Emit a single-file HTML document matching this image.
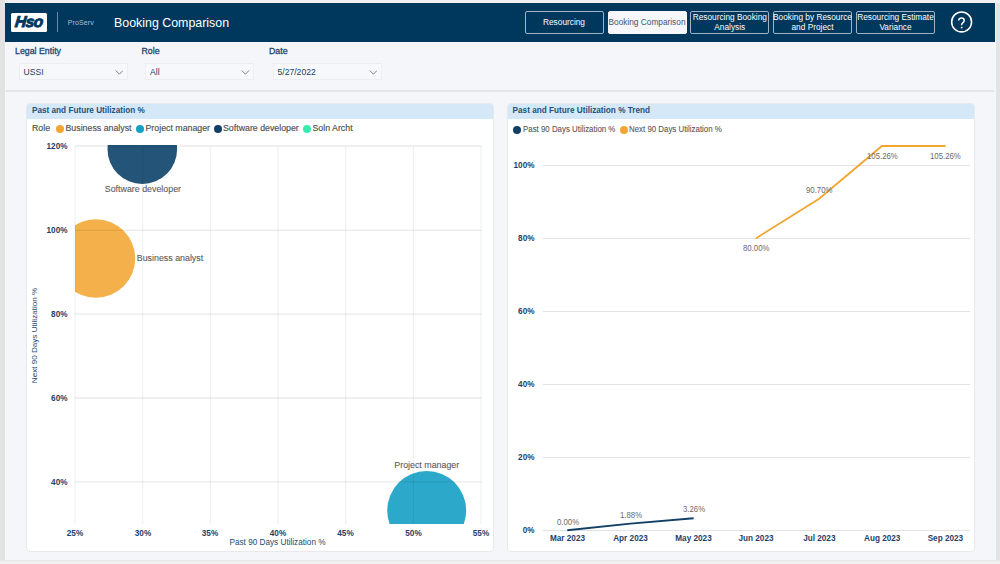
<!DOCTYPE html>
<html><head><meta charset="utf-8">
<style>
*{margin:0;padding:0;box-sizing:border-box}
html,body{width:1000px;height:564px;overflow:hidden;background:#f0f0f0;font-family:"Liberation Sans",sans-serif}
.abs{position:absolute}
#leftstrip{left:0;top:0;width:5px;height:560px;background:#e2e2e2}
#rightstrip{left:996px;top:3px;width:4px;height:557px;background:#e4e4e4}
#botline{left:0;top:560px;width:1000px;height:1px;background:#e6e6e6}
#page{left:5px;top:41px;width:991px;height:519px;background:#f4f6f9}
#header{left:5px;top:3px;width:990px;height:38.5px;background:#00385d}
.logo{left:11px;top:12.5px;width:36px;height:19.5px;background:#fff;border-radius:1.5px}
.logo span{position:absolute;left:4.4px;top:0.9px;font:italic bold 15.6px "Liberation Sans",sans-serif;color:#003660;letter-spacing:-0.6px;-webkit-text-stroke:0.9px #003660;transform:skewX(-6deg)}
.divider{left:57px;top:12.2px;width:1px;height:19.8px;background:#6a8dab}
.proserv{left:67.8px;top:19.1px;font-size:7px;color:#aebfce;letter-spacing:0.12px}
.title{left:114px;top:16px;font-size:12.4px;color:#fff;white-space:nowrap}
.btn{top:11px;height:23px;width:79px;padding-top:0.8px;border:1px solid #9fb3c6;border-radius:2px;color:#fff;font-size:8.3px;line-height:9.5px;display:flex;align-items:center;justify-content:center;text-align:center;white-space:nowrap}
.btn.sel{background:#f5f7fa;color:#3d5577;border-color:#f5f7fa}
.help{left:951px;top:11.5px;width:21px;height:21px;border:2px solid #fff;border-radius:50%;color:#fff;font-size:14px;line-height:17px;text-align:center}
.flabel{top:45.7px;font-size:8.8px;color:#24466e;-webkit-text-stroke:0.3px #24466e}
.dd{top:63px;height:17px;width:109.2px;border:1px solid #eceef1;background:#f6f8fb}
.dd span{position:absolute;left:4px;top:3.2px;font-size:8.6px;color:#28405e}
.chev{position:absolute;right:3.3px;top:6.2px;width:8.8px;height:5px}
#sep{left:6px;top:90px;width:988px;height:1.8px;background:#e3e5e8}
.card{top:102.6px;height:449px;background:#fff;border:1px solid #e8e9eb;border-radius:4px;overflow:hidden}
.ctitle{left:0;top:0;right:0;height:15.5px;background:#d5e8f8}
.ctitle span{position:absolute;left:5px;top:2.3px;font-size:8.2px;font-weight:bold;color:#22507a;white-space:nowrap}
.leg{font-size:8.8px;color:#4f4f4f;white-space:nowrap;-webkit-text-stroke:0.15px #4f4f4f}
.dot{width:8px;height:8px;border-radius:50%}
.ylab{font-size:8.2px;font-weight:bold;color:#1f3f66;white-space:nowrap;margin-top:1px}
.blab{font-size:8.85px;color:#5c5c5c;white-space:nowrap;-webkit-text-stroke:0.1px #5c5c5c}
.dlab{font-size:8.3px;color:#6a6a6a;white-space:nowrap;transform:scaleX(0.94);transform-origin:left top}
</style></head><body>
<div class="abs" id="leftstrip"></div>
<div class="abs" id="botline"></div>
<div class="abs" id="rightstrip"></div>
<div class="abs" id="page"></div>
<div class="abs" id="header">
</div>
<div class="abs logo"><span>Hso</span></div>
<div class="abs divider"></div>
<div class="abs proserv">ProServ</div>
<div class="abs title">Booking Comparison</div>
<div class="abs btn" style="left:524.5px">Resourcing</div>
<div class="abs btn sel" style="left:607.5px">Booking Comparison</div>
<div class="abs btn" style="left:690.3px">Resourcing Booking<br>Analysis</div>
<div class="abs btn" style="left:773px">Booking by Resource<br>and Project</div>
<div class="abs btn" style="left:856px">Resourcing Estimate<br>Variance</div>
<svg class="abs" style="left:950px;top:11px" width="23" height="22" viewBox="0 0 23 22"><circle cx="11.6" cy="10.9" r="9.95" fill="none" stroke="#fff" stroke-width="1.55"/><path d="M8.7 9.6C8.7 7.9 10 6.9 11.5 6.9C13 6.9 14.2 7.9 14.2 9.4C14.2 10.8 13.3 11.4 12.5 12C11.9 12.5 11.6 13 11.6 14.3" fill="none" stroke="#fff" stroke-width="1.5"/><rect x="10.85" y="15.8" width="1.6" height="1.5" fill="#fff"/></svg>

<div class="abs flabel" style="left:15px">Legal Entity</div>
<div class="abs flabel" style="left:141.5px">Role</div>
<div class="abs flabel" style="left:269px">Date</div>
<div class="abs dd" style="left:18.5px"><span>USSI</span><svg class="chev" viewBox="0 0 10 6"><path d="M0.5 0.5L5 5L9.5 0.5" fill="none" stroke="#555" stroke-width="0.9"/></svg></div>
<div class="abs dd" style="left:145px"><span>All</span><svg class="chev" viewBox="0 0 10 6"><path d="M0.5 0.5L5 5L9.5 0.5" fill="none" stroke="#555" stroke-width="0.9"/></svg></div>
<div class="abs dd" style="left:272.5px"><span>5/27/2022</span><svg class="chev" viewBox="0 0 10 6"><path d="M0.5 0.5L5 5L9.5 0.5" fill="none" stroke="#555" stroke-width="0.9"/></svg></div>
<div class="abs" id="sep"></div>

<!-- Left card -->
<div class="abs card" style="left:26px;width:467.5px">
  <div class="abs ctitle"><span>Past and Future Utilization %</span></div>
</div>
<!-- Right card -->
<div class="abs card" style="left:506.6px;width:468.6px">
  <div class="abs ctitle"><span>Past and Future Utilization % Trend</span></div>
</div>

<svg class="abs" style="left:0;top:0" width="1000" height="564" viewBox="0 0 1000 564">
  <!-- left chart -->
  <defs><clipPath id="plotclip"><rect x="75" y="145" width="406" height="379"/></clipPath></defs>
  <g clip-path="url(#plotclip)">
    <circle cx="142.3" cy="149.2" r="34.8" fill="#11456b" fill-opacity="0.92"/>
    <circle cx="95.9" cy="258.5" r="39.3" fill="#f2a531" fill-opacity="0.88"/>
    <circle cx="426.7" cy="510.5" r="39.5" fill="#15a0c4" fill-opacity="0.9"/>
  </g>
  <g stroke="rgba(0,0,0,0.08)" stroke-width="1.35">
    <line x1="75" y1="146" x2="481.5" y2="146"/>
    <line x1="75" y1="230.3" x2="481.5" y2="230.3"/>
    <line x1="75" y1="314.1" x2="481.5" y2="314.1"/>
    <line x1="75" y1="398" x2="481.5" y2="398"/>
    <line x1="75" y1="481.8" x2="481.5" y2="481.8"/>
  </g>
  <g stroke="rgba(0,0,0,0.058)" stroke-width="1.2">
    <line x1="75" y1="146.6" x2="75" y2="524"/>
    <line x1="142.7" y1="146.6" x2="142.7" y2="524"/>
    <line x1="210.3" y1="146.6" x2="210.3" y2="524"/>
    <line x1="278" y1="146.6" x2="278" y2="524"/>
    <line x1="345.7" y1="146.6" x2="345.7" y2="524"/>
    <line x1="413.4" y1="146.6" x2="413.4" y2="524"/>
    <line x1="481" y1="146.6" x2="481" y2="524"/>
  </g>
  <!-- right chart gridlines -->
  <g stroke="#e3e3e3" stroke-width="1.1">
    <line x1="542.5" y1="165.5" x2="970" y2="165.5"/>
    <line x1="542.5" y1="238.5" x2="970" y2="238.5"/>
    <line x1="542.5" y1="311.5" x2="970" y2="311.5"/>
    <line x1="542.5" y1="384.5" x2="970" y2="384.5"/>
    <line x1="542.5" y1="457.5" x2="970" y2="457.5"/>
    <line x1="542.5" y1="530.5" x2="970" y2="530.5"/>
  </g>
  <polyline points="567.3,530.3 630.4,523.6 693.6,518.3" fill="none" stroke="#123f66" stroke-width="1.9"/>
  <polyline points="755.8,238.4 819.1,198.8 881.9,146 945.5,146" fill="none" stroke="#f2a531" stroke-width="1.8"/>
</svg>

<!-- left chart legend -->
<div class="abs leg" style="left:32px;top:123px">Role</div>
<div class="abs dot" style="left:55.8px;top:125px;background:#f2a531"></div>
<div class="abs leg" style="left:65.5px;top:123px">Business analyst</div>
<div class="abs dot" style="left:136.2px;top:125px;background:#15a0c4"></div>
<div class="abs leg" style="left:145.5px;top:123px">Project manager</div>
<div class="abs dot" style="left:214px;top:125px;background:#123f66"></div>
<div class="abs leg" style="left:223px;top:123px">Software developer</div>
<div class="abs dot" style="left:302.5px;top:125px;background:#37eab0"></div>
<div class="abs leg" style="left:312.5px;top:123px">Soln Archt</div>

<!-- left y labels -->
<div class="abs ylab" style="right:932.5px;top:141px">120%</div>
<div class="abs ylab" style="right:932.5px;top:225px">100%</div>
<div class="abs ylab" style="right:932.5px;top:309px">80%</div>
<div class="abs ylab" style="right:932.5px;top:393px">60%</div>
<div class="abs ylab" style="right:932.5px;top:477px">40%</div>
<!-- left x labels -->
<div class="abs ylab" style="left:58px;top:527.5px;width:34px;text-align:center">25%</div>
<div class="abs ylab" style="left:126px;top:527.5px;width:34px;text-align:center">30%</div>
<div class="abs ylab" style="left:193px;top:527.5px;width:34px;text-align:center">35%</div>
<div class="abs ylab" style="left:261px;top:527.5px;width:34px;text-align:center">40%</div>
<div class="abs ylab" style="left:328.5px;top:527.5px;width:34px;text-align:center">45%</div>
<div class="abs ylab" style="left:396.5px;top:527.5px;width:34px;text-align:center">50%</div>
<div class="abs ylab" style="left:464px;top:527.5px;width:34px;text-align:center">55%</div>
<div class="abs" style="left:229.5px;top:537.5px;font-size:8.2px;color:#244a75;white-space:nowrap">Past 90 Days Utilization %</div>
<div class="abs" style="left:-13.6px;top:330.6px;width:96px;font-size:8.1px;color:#244a75;white-space:nowrap;transform:rotate(-90deg);text-align:center">Next 90 Days Utilization %</div>
<!-- bubble labels -->
<div class="abs blab" style="left:104.8px;top:184.2px">Software developer</div>
<div class="abs blab" style="left:136.8px;top:253.2px">Business analyst</div>
<div class="abs blab" style="left:394.3px;top:459.7px">Project manager</div>

<!-- right legend -->
<div class="abs dot" style="left:513px;top:125.5px;background:#123f66"></div>
<div class="abs leg" style="left:522.8px;top:124.2px;font-size:9px;color:#585858;transform:scaleX(0.875);transform-origin:left top;-webkit-text-stroke:0.1px #585858">Past 90 Days Utilization %</div>
<div class="abs dot" style="left:619.7px;top:125.5px;background:#f2a531"></div>
<div class="abs leg" style="left:629px;top:124.2px;font-size:9px;color:#585858;transform:scaleX(0.875);transform-origin:left top;-webkit-text-stroke:0.1px #585858">Next 90 Days Utilization %</div>
<!-- right y labels -->
<div class="abs ylab" style="right:465.5px;top:160.0px">100%</div>
<div class="abs ylab" style="right:465.5px;top:233.0px">80%</div>
<div class="abs ylab" style="right:465.5px;top:306.0px">60%</div>
<div class="abs ylab" style="right:465.5px;top:379.0px">40%</div>
<div class="abs ylab" style="right:465.5px;top:452.0px">20%</div>
<div class="abs ylab" style="right:465.5px;top:525.0px">0%</div>
<!-- right x labels -->
<div class="abs ylab" style="left:537.5px;top:532.8px;width:60px;text-align:center">Mar 2023</div>
<div class="abs ylab" style="left:600.5px;top:532.8px;width:60px;text-align:center">Apr 2023</div>
<div class="abs ylab" style="left:663.5px;top:532.8px;width:60px;text-align:center">May 2023</div>
<div class="abs ylab" style="left:726px;top:532.8px;width:60px;text-align:center">Jun 2023</div>
<div class="abs ylab" style="left:789.3px;top:532.8px;width:60px;text-align:center">Jul 2023</div>
<div class="abs ylab" style="left:852.2px;top:532.8px;width:60px;text-align:center">Aug 2023</div>
<div class="abs ylab" style="left:915.4px;top:532.8px;width:60px;text-align:center">Sep 2023</div>
<!-- data labels -->
<div class="abs dlab" style="left:557px;top:516.6px">0.00%</div>
<div class="abs dlab" style="left:620px;top:509.6px">1.88%</div>
<div class="abs dlab" style="left:683px;top:504.3px">3.26%</div>
<div class="abs dlab" style="left:743.2px;top:243.3px">80.00%</div>
<div class="abs dlab" style="left:806px;top:184.8px">90.70%</div>
<div class="abs dlab" style="left:867px;top:150.8px">105.26%</div>
<div class="abs dlab" style="left:930px;top:150.8px">105.26%</div>
</body></html>
